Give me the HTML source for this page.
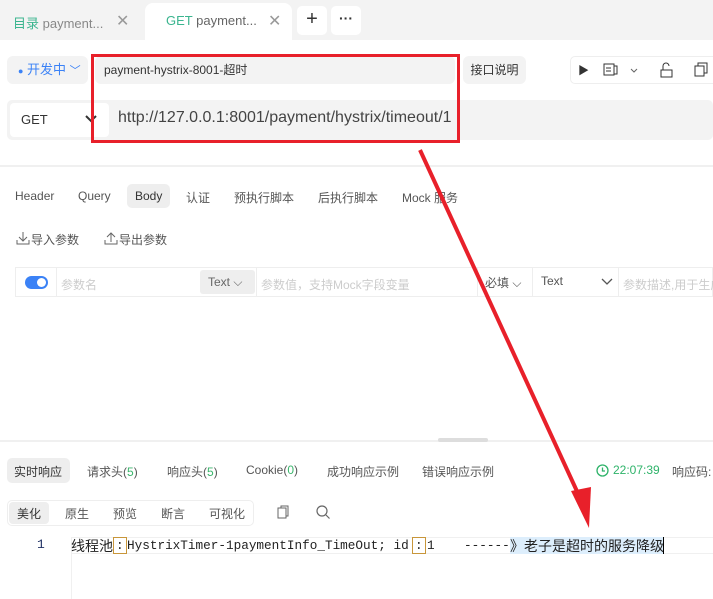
<!DOCTYPE html>
<html><head><meta charset="utf-8"><style>
*{margin:0;padding:0;box-sizing:border-box}
body{width:713px;height:599px;overflow:hidden;background:#fff;font-family:"Liberation Sans","Noto Sans CJK SC",sans-serif;font-size:13px;color:#333;position:relative}
.a{position:absolute;white-space:nowrap}
.m{font-family:'Liberation Mono',monospace;color:#222;line-height:17px;top:537px;font-size:12.7px}
</style></head><body>
<div class="a" style="left:0;top:0;width:713px;height:40px;background:#f3f3f3"></div>
<div class="a" style="left:145px;top:3px;width:147px;height:37px;background:#fff;border-radius:8px 8px 0 0"></div>
<div class="a" style="left:13px;top:13px;font-size:13px;color:#888"><span style="color:#3bb58f">目录</span> payment...</div>
<div class="a" style="left:116px;top:11px;font-size:16px;color:#999">✕</div>
<div class="a" style="left:166px;top:13px;color:#666"><span style="color:#3bb58f">GET</span> payment...</div>
<div class="a" style="left:268px;top:11px;font-size:16px;color:#999">✕</div>
<div class="a" style="left:297px;top:6px;width:30px;height:29px;background:#fff;border-radius:5px;text-align:center;font-size:20px;line-height:27px;color:#333">+</div>
<div class="a" style="left:331px;top:6px;width:30px;height:29px;background:#fff;border-radius:5px;text-align:center;font-size:14px;line-height:24px;font-weight:bold">···</div>

<div class="a" style="left:7px;top:56px;width:81px;height:28px;background:#f3f3f3;border-radius:6px;color:#3b82f6;line-height:28px;padding-left:11px"><span style="font-size:9px">●</span> 开发中 <span style="font-size:11px">﹀</span></div>
<div class="a" style="left:95px;top:56px;width:360px;height:28px;background:#f3f3f3;border-radius:6px;font-size:12px;line-height:28px;padding-left:9px">payment-hystrix-8001-超时</div>
<div class="a" style="left:463px;top:56px;width:63px;height:28px;background:#f3f3f3;border-radius:6px;font-size:12px;line-height:28px;text-align:center">接口说明</div>
<div class="a" style="left:570px;top:56px;width:150px;height:28px;border:1px solid #eee;border-radius:5px"></div>
<div class="a" style="left:578px;top:62px;font-size:11px">▶</div>
<svg class="a" style="left:603px;top:62px" width="80" height="16"><rect x="1" y="2" width="10" height="11" fill="none" stroke="#333"/><line x1="3" y1="6" x2="8" y2="6" stroke="#333"/><line x1="3" y1="9" x2="8" y2="9" stroke="#333"/><rect x="11" y="4" width="3" height="8" fill="none" stroke="#333"/><path d="M28 7l3 3 3-3" fill="none" stroke="#666"/><rect x="58" y="8" width="11" height="7" fill="none" stroke="#333"/><path d="M60 8V4a3 3 0 0 1 6 0" fill="none" stroke="#333"/></svg>
<svg class="a" style="left:694px;top:62px" width="19" height="16"><rect x="1" y="4" width="9" height="10" fill="none" stroke="#333"/><path d="M4 4V1h9v10h-3" fill="none" stroke="#333"/></svg>

<div class="a" style="left:7px;top:100px;width:706px;height:40px;background:#f3f3f3;border-radius:5px"></div>
<div class="a" style="left:10px;top:103px;width:99px;height:34px;background:#fff;border-radius:4px;line-height:34px;padding-left:11px;font-size:13px">GET</div>
<svg class="a" style="left:84px;top:114px" width="14" height="10"><path d="M2 2l5 5 5-5" fill="none" stroke="#333" stroke-width="2"/></svg>
<div class="a" style="left:118px;top:109px;font-size:16px;color:#444">http://127.0.0.1:8001/payment/hystrix/timeout/1</div>
<div class="a" style="left:91px;top:54px;width:369px;height:89px;border:3px solid #e8202a"></div>

<div class="a" style="left:0;top:165px;width:713px;height:2px;background:#f0f0f0"></div>
<div class="a" style="left:127px;top:184px;width:43px;height:24px;background:#eee;border-radius:5px"></div>
<div class="a" style="left:15px;top:189px;font-size:12px;color:#555">Header</div>
<div class="a" style="left:78px;top:189px;font-size:12px;color:#555">Query</div>
<div class="a" style="left:135px;top:189px;font-size:12px;color:#333">Body</div>
<div class="a" style="left:186px;top:189px;font-size:12px;color:#555">认证</div>
<div class="a" style="left:234px;top:189px;font-size:12px;color:#555">预执行脚本</div>
<div class="a" style="left:318px;top:189px;font-size:12px;color:#555">后执行脚本</div>
<div class="a" style="left:402px;top:189px;font-size:12px;color:#555">Mock 服务</div>
<svg class="a" style="left:16px;top:231px" width="14" height="14"><path d="M7 1v9M3 6l4 4 4-4M1 9v4h12V9" fill="none" stroke="#666"/></svg>
<div class="a" style="left:31px;top:231px;font-size:12px;color:#555">导入参数</div>
<svg class="a" style="left:104px;top:231px" width="14" height="14"><path d="M7 11V2M3 6l4-4 4 4M1 9v4h12V9" fill="none" stroke="#666"/></svg>
<div class="a" style="left:119px;top:231px;font-size:12px;color:#555">导出参数</div>

<div class="a" style="left:15px;top:267px;width:698px;height:30px;border:1px solid #eee"></div>
<div class="a" style="left:56px;top:267px;width:1px;height:30px;background:#eee"></div>
<div class="a" style="left:256px;top:267px;width:1px;height:30px;background:#eee"></div>
<div class="a" style="left:477px;top:267px;width:1px;height:30px;background:#eee"></div>
<div class="a" style="left:532px;top:267px;width:1px;height:30px;background:#eee"></div>
<div class="a" style="left:618px;top:267px;width:1px;height:30px;background:#eee"></div>
<div class="a" style="left:25px;top:276px;width:23px;height:13px;background:#3b82f6;border-radius:7px"></div>
<div class="a" style="left:37px;top:278px;width:9px;height:9px;background:#fff;border-radius:50%"></div>
<div class="a" style="left:61px;top:276px;font-size:12px;color:#ccc">参数名</div>
<div class="a" style="left:200px;top:270px;width:55px;height:24px;background:#eee;border-radius:3px;font-size:12px;line-height:24px;padding-left:8px;color:#666">Text ⌵</div>
<div class="a" style="left:261px;top:276px;font-size:12px;color:#ccc">参数值，支持Mock字段变量</div>
<div class="a" style="left:485px;top:274px;font-size:12px;color:#555">必填 ⌵</div>
<div class="a" style="left:541px;top:274px;font-size:12px;color:#555">Text</div>
<svg class="a" style="left:601px;top:278px" width="12" height="8"><path d="M1 1l5 5 5-5" fill="none" stroke="#555" stroke-width="1.3"/></svg>
<div class="a" style="left:623px;top:276px;font-size:12px;color:#ccc">参数描述,用于生成</div>

<div class="a" style="left:0;top:440px;width:713px;height:2px;background:#f0f0f0"></div>
<div class="a" style="left:438px;top:438px;width:50px;height:4px;background:#ddd;border-radius:2px"></div>
<div class="a" style="left:7px;top:458px;width:63px;height:25px;background:#eee;border-radius:5px"></div>
<div class="a" style="left:14px;top:463px;font-size:12px">实时响应</div>
<div class="a" style="left:87px;top:463px;font-size:12px;color:#555">请求头(<span style="color:#3bb56c">5</span>)</div>
<div class="a" style="left:167px;top:463px;font-size:12px;color:#555">响应头(<span style="color:#3bb56c">5</span>)</div>
<div class="a" style="left:246px;top:463px;font-size:12px;color:#555">Cookie(<span style="color:#3bb56c">0</span>)</div>
<div class="a" style="left:327px;top:463px;font-size:12px;color:#555">成功响应示例</div>
<div class="a" style="left:422px;top:463px;font-size:12px;color:#555">错误响应示例</div>
<svg class="a" style="left:596px;top:464px" width="13" height="13"><circle cx="6.5" cy="6.5" r="5.5" fill="none" stroke="#2fb36a" stroke-width="1.3"/><path d="M6.5 3.5v3.5h2.5" fill="none" stroke="#2fb36a" stroke-width="1.3"/></svg>
<div class="a" style="left:613px;top:463px;font-size:12px;color:#2fb36a">22:07:39</div>
<div class="a" style="left:672px;top:463px;font-size:12px;color:#555">响应码:</div>

<div class="a" style="left:7px;top:500px;width:247px;height:26px;border:1px solid #eee;border-radius:5px"></div>
<div class="a" style="left:9px;top:502px;width:40px;height:22px;background:#eee;border-radius:4px"></div>
<div class="a" style="left:17px;top:505px;font-size:12px">美化</div>
<div class="a" style="left:65px;top:505px;font-size:12px;color:#555">原生</div>
<div class="a" style="left:113px;top:505px;font-size:12px;color:#555">预览</div>
<div class="a" style="left:161px;top:505px;font-size:12px;color:#555">断言</div>
<div class="a" style="left:209px;top:505px;font-size:12px;color:#555">可视化</div>
<svg class="a" style="left:276px;top:505px" width="14" height="15"><rect x="2" y="3" width="8" height="10" fill="none" stroke="#666"/><path d="M5 3V1h7v10h-2" fill="none" stroke="#666"/></svg>
<svg class="a" style="left:316px;top:505px" width="15" height="15"><circle cx="6" cy="6" r="5" fill="none" stroke="#666" stroke-width="1.2"/><path d="M10 10l3.5 3.5" stroke="#666" stroke-width="1.2"/></svg>

<div class="a" style="left:71px;top:537px;width:642px;height:1px;background:#f0f0f0"></div>
<div class="a" style="left:71px;top:553px;width:642px;height:1px;background:#f0f0f0"></div>
<div class="a" style="left:71px;top:537px;width:1px;height:62px;background:#f0f0f0"></div>
<div class="a" style="left:510px;top:537px;width:154px;height:17px;background:#ddeefc"></div>
<div class="a" style="left:37px;top:537px;font-size:13px;color:#236;font-family:'Liberation Mono',monospace">1</div>
<div class="a" style="left:71px;top:536px;font-size:14px;color:#222">线程池</div>
<div class="a" style="left:113px;top:537px;width:14px;height:17px;border:1px solid #c8963a"></div>
<div class="a" style="left:412px;top:537px;width:14px;height:17px;border:1px solid #c8963a"></div>
<div class="a m" style="left:116px">:</div>
<div class="a m" style="left:127px">HystrixTimer-1paymentInfo_TimeOut; id</div>
<div class="a m" style="left:415px">:</div>
<div class="a m" style="left:427px">1</div>
<div class="a m" style="left:464px">------</div>
<div class="a" style="left:510px;top:536px;font-size:14px;color:#222">》老子是超时的服务降级</div>
<div class="a" style="left:663px;top:537px;width:1px;height:17px;background:#000"></div>

<svg class="a" style="left:0;top:0" width="713" height="599"><line x1="420" y1="150" x2="581" y2="500" stroke="#e8202a" stroke-width="4"/><path d="M571 491 L589 528 L591 487 Z" fill="#e8202a"/></svg>
</body></html>
